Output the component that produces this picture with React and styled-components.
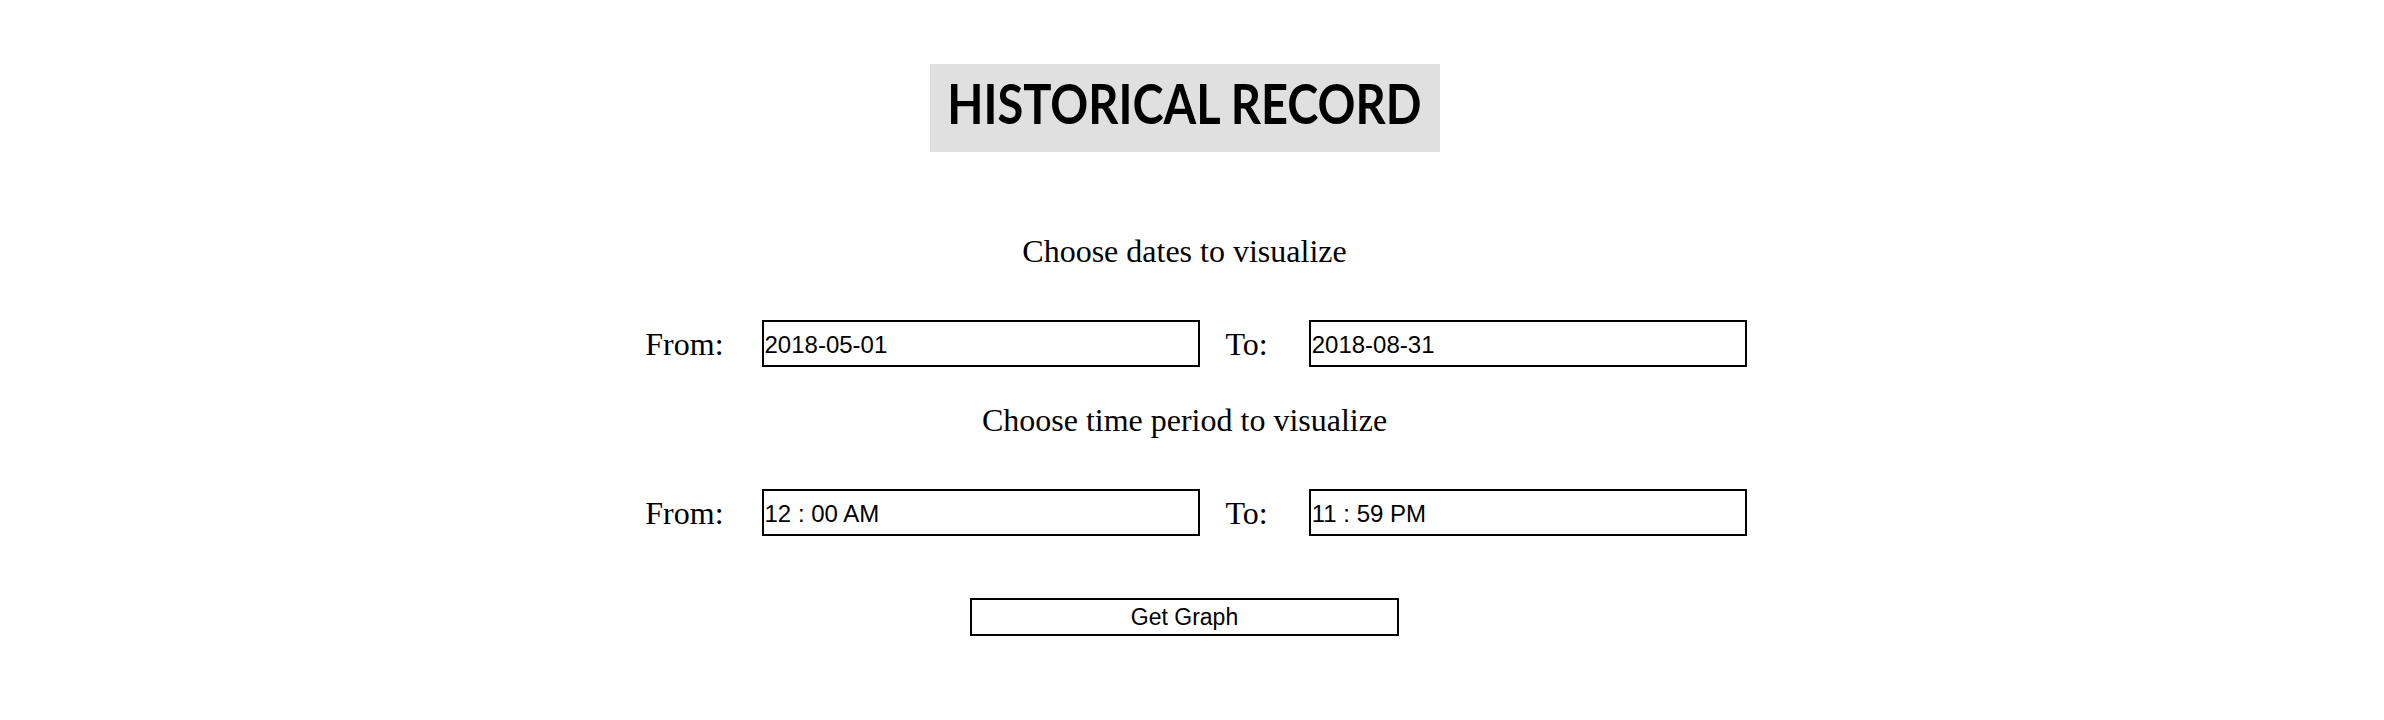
import React from "react";
import styled, { createGlobalStyle } from "styled-components";

const GlobalStyle = createGlobalStyle`
  body {
    margin: 0;
    background: #fff;
    font-family: "Liberation Serif", "Times New Roman", serif;
    color: #000;
  }
`;

const Page = styled.div`
  display: flex;
  flex-direction: column;
  align-items: center;
  padding: 64px 15px 40px 0;
`;

const TitleBox = styled.div`
  box-sizing: border-box;
  width: 510px;
  height: 88px;
  padding-bottom: 10px;
  background: #e0e0e0;
  display: flex;
  align-items: center;
  justify-content: center;
  overflow: hidden;
`;

const TitleText = styled.h1`
  margin: 0;
  display: inline-block;
  font-family: Lato, "Noto Sans", sans-serif;
  font-weight: 700;
  font-size: 55px;
  line-height: 1;
  white-space: nowrap;
  transform: scaleX(0.855);
`;

const Subtitle = styled.p`
  margin: ${(props) => props.top}px 0 0;
  font-size: 32px;
  line-height: 36px;
`;

const Row = styled.div`
  display: flex;
  align-items: center;
  margin-top: 51px;
  padding-left: 23px;
`;

const Label = styled.label`
  font-size: 32px;
  line-height: 36px;
  margin-right: ${(props) => props.gap}px;
`;

const Field = styled.input`
  box-sizing: border-box;
  width: 438px;
  height: 47px;
  margin-right: ${(props) => props.gap || 0}px;
  padding: 2px 1px 0;
  border: 2px solid #000;
  background: #fff;
  font-family: "Liberation Sans", Arial, sans-serif;
  font-size: 24px;
  color: #000;
  outline: none;
`;

const Button = styled.button`
  box-sizing: border-box;
  width: 429px;
  height: 38px;
  margin-top: 62px;
  border: 2px solid #000;
  background: #fff;
  font-family: "Liberation Sans", Arial, sans-serif;
  font-size: 23px;
  color: #000;
  cursor: pointer;
`;

const RangeRow = ({ from, to }) => (
  <Row>
    <Label gap={38}>From:</Label>
    <Field type="text" defaultValue={from} gap={26} />
    <Label gap={41}>To:</Label>
    <Field type="text" defaultValue={to} />
  </Row>
);

export default function App() {
  return (
    <>
      <GlobalStyle />
      <Page>
        <TitleBox>
          <TitleText>HISTORICAL RECORD</TitleText>
        </TitleBox>
        <Subtitle top={81}>Choose dates to visualize</Subtitle>
        <RangeRow from="2018-05-01" to="2018-08-31" />
        <Subtitle top={35}>Choose time period to visualize</Subtitle>
        <RangeRow from="12 : 00 AM" to="11 : 59 PM" />
        <Button>Get Graph</Button>
      </Page>
    </>
  );
}
